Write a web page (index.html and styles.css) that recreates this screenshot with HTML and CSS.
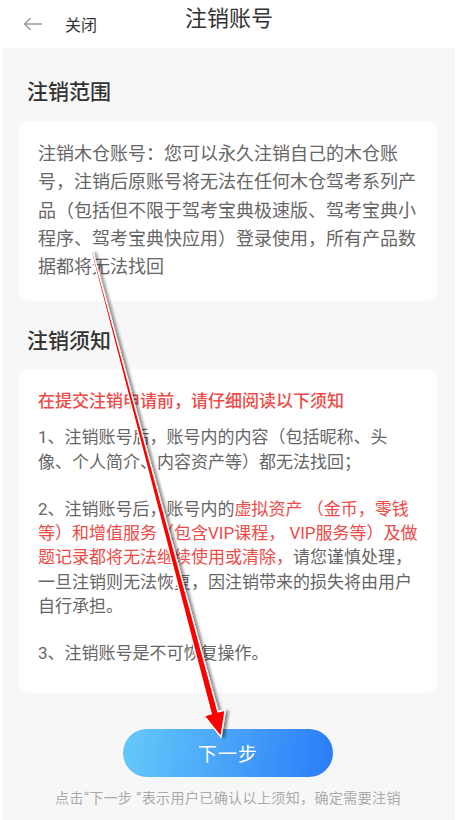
FILE: index.html
```html
<!DOCTYPE html>
<html lang="zh-CN">
<head>
  <meta charset="UTF-8" />
  <meta name="viewport" content="width=device-width, initial-scale=1.0"/>
  <title>注销账号</title>
  <link rel="stylesheet" href="styles.css">
</head>
<body>
  <header class="topbar">
    <div class="topbar-left">
      <svg class="back-icon" width="20" height="14" viewBox="0 0 20 14">
        <path d="M19 7H1.5M7.5 1L1.5 7L7.5 13" fill="none" stroke="#9a9a9a" stroke-width="1.3"/>
      </svg>
      <span class="close-text">关闭</span>
    </div>
    <h1 class="page-title">注销账号</h1>
    <div></div>
  </header>

  <main class="content">
    <!-- 注销范围 -->
    <h2 class="section-title">注销范围</h2>
    <div class="card card-scope">
      注销木仓账号：您可以永久注销自己的木仓账号，注销后原账号将无法在任何木仓驾考系列产品（包括但不限于驾考宝典极速版、驾考宝典小程序、驾考宝典快应用）登录使用，所有产品数据都将无法找回
    </div>

    <!-- 注销须知 -->
    <h2 class="section-title section-title-second">注销须知</h2>
    <div class="card card-notice">
      <p class="notice-head">在提交注销申请前，请仔细阅读以下须知</p>
      <p>1、注销账号后，账号内的内容（包括昵称、头像、个人简介、内容资产等）都无法找回；</p>
      <p>2、注销账号后，账号内的<span class="warn">虚拟资产 （金币，零钱等）和增值服务（包含VIP课程， VIP服务等）及做题记录都将无法继续使用或清除，</span>请您谨慎处理，一旦注销则无法恢复，因注销带来的损失将由用户自行承担。</p>
      <p>3、注销账号是不可恢复操作。</p>
    </div>

    <button type="button" class="next-btn">下一步</button>
    <div class="note">点击“下一步 ”表示用户已确认以上须知，确定需要注销</div>
  </main>

  <!-- annotation arrow drawn over the page -->
  <svg class="annot" width="458" height="820" viewBox="0 0 458 820">
    <defs>
      <filter id="shadow" x="-50%" y="-10%" width="200%" height="120%">
        <feDropShadow dx="3" dy="1" stdDeviation="1.6" flood-color="#000" flood-opacity="0.45"/>
      </filter>
    </defs>
    <polygon points="91.2,252.2 92.8,251.8 218,712 225.2,710.1 221,737 204,715.7 211.2,713.8"
             fill="#ff0000" stroke="#ffffff" stroke-width="1.4" stroke-linejoin="miter" filter="url(#shadow)"/>
  </svg>
</body>
</html>
```

FILE: styles.css
```css
:root {
  --page-bg: #f7f7f7;
  --title-color: #333333;
  --text-color: #666666;
  --red: #ef4a47;
}

body {
  margin: 0;
  width: 458px;
  min-height: 820px;
  background-color: #ffffff;
  font-family: Roboto, "Noto Sans CJK SC", sans-serif;
  position: relative;
}

.topbar {
  height: 48px;
  display: grid;
  grid-template-columns: 1fr auto 1fr;
  align-items: center;
  background-color: #ffffff;
}

.topbar-left {
  display: flex;
  align-items: center;
  padding-left: 23px;
}

.back-icon {
  display: block;
}

.close-text {
  margin-left: 22px;
  font-size: 16px;
  color: var(--title-color);
}

.page-title {
  margin: 0 0 10px;
  font-size: 22px;
  font-weight: 400;
  color: var(--title-color);
  line-height: 30px;
}

.content {
  margin: 0 3px 0 2px;
  padding: 29px 18px 10px 17px;
  background-color: var(--page-bg);
  min-height: 733px;
}

.section-title {
  margin: 0 0 14px 8px;
  font-size: 21px;
  font-weight: 500;
  line-height: 30px;
  color: var(--title-color);
}

.section-title-second {
  margin-top: 25px;
  margin-bottom: 13px;
}

.card {
  background-color: #ffffff;
  border-radius: 10px;
  color: var(--text-color);
}

.card-scope {
  padding: 19px 19px 20px;
  font-size: 18px;
  line-height: 28.25px;
}

.card-notice {
  padding: 20px 19px 27px;
  font-size: 17px;
  line-height: 24.3px;
}

.card-notice p {
  margin: 23px 0 0;
}

.card-notice .notice-head {
  margin: 0;
  color: var(--red);
  font-weight: 500;
  line-height: 24px;
}

.card-notice .notice-head + p {
  margin-top: 12px;
}

.warn {
  color: var(--red);
}

.next-btn {
  display: block;
  margin: 36px auto 0;
  width: 210px;
  height: 48px;
  border: none;
  border-radius: 24px;
  background: linear-gradient(100deg, #66caf9, #2a7bf7);
  color: #ffffff;
  font-family: inherit;
  font-size: 19px;
  letter-spacing: 1px;
}

.note {
  margin-top: 11px;
  text-align: center;
  font-size: 14px;
  line-height: 20px;
  letter-spacing: 0.4px;
  color: #aaaaaa;
}

.annot {
  position: absolute;
  left: 0;
  top: 0;
  pointer-events: none;
}
```
